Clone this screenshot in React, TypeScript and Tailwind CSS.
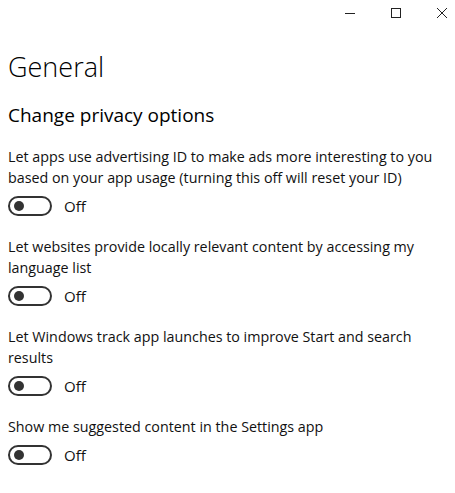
const items = [
  'Let apps use advertising ID to make ads more interesting to you based on your app usage (turning this off will reset your ID)',
  'Let websites provide locally relevant content by accessing my language list',
  'Let Windows track app launches to improve Start and search results',
  'Show me suggested content in the Settings app',
]

function Toggle() {
  return (
    <div className="flex h-[20px] items-center gap-[12px]">
      <div className="flex h-[20px] w-[44px] items-center rounded-full border-2 border-[#333] px-[4px]">
        <div className="h-[10px] w-[10px] rounded-full bg-[#333]" />
      </div>
      <span className="text-[15px] leading-[20px] text-[#111]">Off</span>
    </div>
  )
}

export default function App() {
  return (
    <div className="h-[493px] w-[455px] overflow-hidden bg-white font-['Open_Sans',sans-serif] text-black">
      <div className="flex h-[24px] items-center justify-end gap-[36px] pr-[8px] pt-[2px] text-[#222]">
        <svg width="10" height="10" viewBox="0 0 10 10">
          <path d="M0 5.5h10" stroke="currentColor" strokeWidth="1" />
        </svg>
        <svg width="10" height="10" viewBox="0 0 10 10">
          <rect x="0.5" y="0.5" width="9" height="9" fill="none" stroke="currentColor" strokeWidth="1" />
        </svg>
        <svg width="10" height="10" viewBox="0 0 10 10">
          <path d="M0 0L10 10M10 0L0 10" stroke="currentColor" strokeWidth="1" />
        </svg>
      </div>
      <div className="px-[8px]">
        <h1 className="mt-[23px] text-[27px] font-light leading-[40px]">General</h1>
        <h2 className="mt-[14px] text-[19px] leading-[28px]">Change privacy options</h2>
        <div className="mt-[17px] flex flex-col gap-[20px]">
          {items.map((t) => (
            <div key={t} className="flex flex-col gap-[8px]">
              <p className="text-[14.3px] leading-[21px] text-[#111]">{t}</p>
              <Toggle />
            </div>
          ))}
        </div>
      </div>
    </div>
  )
}
